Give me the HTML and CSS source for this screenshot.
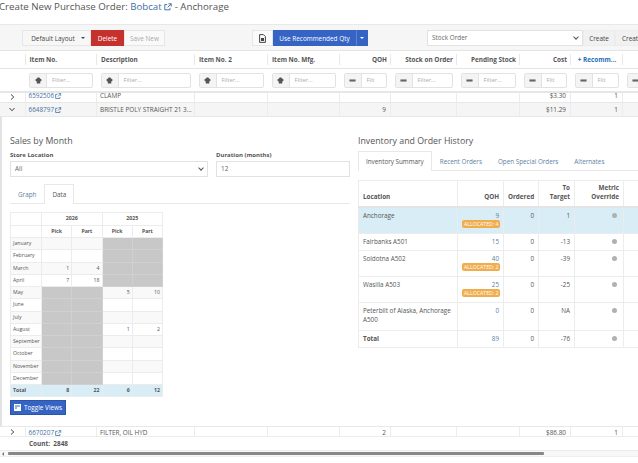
FILE: index.html
```html
<!DOCTYPE html>
<html lang="en">
<head>
<meta charset="utf-8">
<title>Create New Purchase Order</title>
<link rel="stylesheet" href="styles.css">
</head>
<body>
<svg class="defs" width="0" height="0" aria-hidden="true">
  <symbol id="ext" viewBox="0 0 10 10"><path d="M7.5 6v2.5h-6.500v-6.500h3M5.500 1h3.500v3.500M9 1 4.500 5.500" fill="none" stroke="currentColor" stroke-width="1.200"/></symbol>
  <symbol id="flt" viewBox="0 0 8 8"><path d="M0.500 3.500c0-1 1-1.500 1.700-1.500 0-1 .8-1.500 1.800-1.500s1.800.5 1.800 1.500c.7 0 1.700.5 1.700 1.500 0 1-.8 1.500-1.500 1.500v2.500h-4v-2.500c-.7 0-1.500-.5-1.500-1.500z" fill="#555"/></symbol>
  <symbol id="dash" viewBox="0 0 8 8"><rect x="0.500" y="2.800" width="7" height="2.400" fill="#666"/></symbol>
</svg>

<h1 class="title">Create New Purchase Order: <a class="link">Bobcat <svg class="ext-lg"><use href="#ext"/></svg></a> - Anchorage</h1>

<div class="toolbar">
  <button class="btn btn-layout">Default Layout <span class="caret"></span></button>
  <button class="btn btn-danger">Delete</button>
  <button class="btn btn-muted">Save New</button>
  <button class="btn btn-doc"><svg width="7" height="9" viewBox="0 0 7 9"><path d="M.6.6h3.800l2 2v5.800h-5.800z" fill="none" stroke="#444"/><path d="M2 4h3v3H2z" fill="#444"/></svg></button>
  <button class="btn btn-primary">Use Recommended Qty</button>
  <button class="btn btn-primary btn-split"><span class="caret caret-white"></span></button>
  <div class="select select-order">Stock Order<span class="chev"></span></div>
  <button class="btn btn-create">Create</button>
  <button class="btn btn-create-2">Create</button>
</div>

<div class="row head">
  <div class="c"></div>
  <div class="c">Item No.</div>
  <div class="c">Description</div>
  <div class="c">Item No. 2</div>
  <div class="c">Item No. Mfg.</div>
  <div class="c r">QOH</div>
  <div class="c r">Stock on Order</div>
  <div class="c r">Pending Stock</div>
  <div class="c r">Cost</div>
  <div class="c r recomm">+ Recomm...</div>
  <div class="c"></div>
</div>

<div class="row filters">
  <div class="c"></div>
  <div class="c"><div class="filter"><span class="addon"><svg class="fi"><use href="#flt"/></svg></span><span class="ph">Filter...</span></div></div>
  <div class="c"><div class="filter"><span class="addon"><svg class="fi"><use href="#flt"/></svg></span><span class="ph">Filter...</span></div></div>
  <div class="c"><div class="filter"><span class="addon"><svg class="fi"><use href="#flt"/></svg></span><span class="ph">Filter...</span></div></div>
  <div class="c"><div class="filter"><span class="addon"><svg class="fi"><use href="#flt"/></svg></span><span class="ph">Filter...</span></div></div>
  <div class="c"><div class="filter"><span class="addon"><svg class="fi"><use href="#dash"/></svg></span><span class="ph">Filt</span></div></div>
  <div class="c"><div class="filter"><span class="addon"><svg class="fi"><use href="#dash"/></svg></span><span class="ph">Filter...</span></div></div>
  <div class="c"><div class="filter"><span class="addon"><svg class="fi"><use href="#dash"/></svg></span><span class="ph">Filter...</span></div></div>
  <div class="c"><div class="filter"><span class="addon"><svg class="fi"><use href="#dash"/></svg></span><span class="ph">Filt</span></div></div>
  <div class="c"><div class="filter"><span class="addon"><svg class="fi"><use href="#dash"/></svg></span><span class="ph">Filt</span></div></div>
  <div class="c"><div class="filter"><span class="addon"><svg class="fi"><use href="#dash"/></svg></span></div></div>
</div>

<div class="row item item-clipped">
  <div class="c exp"><svg width="5" height="6" viewBox="0 0 5 6"><path d="M1 .5 3.800 3 1 5.500" fill="none" stroke="#444"/></svg></div>
  <div class="c"><a class="link">6592506<svg class="ext"><use href="#ext"/></svg></a></div>
  <div class="c">CLAMP</div>
  <div class="c"></div><div class="c"></div><div class="c r"></div><div class="c"></div><div class="c"></div>
  <div class="c r">$3.30</div><div class="c r">1</div><div class="c"></div>
</div>
<div class="row item item-open">
  <div class="c exp"><svg width="6" height="5" viewBox="0 0 6 5"><path d="M.5 1 3 3.800 5.500 1" fill="none" stroke="#444"/></svg></div>
  <div class="c"><a class="link">6648797<svg class="ext"><use href="#ext"/></svg></a></div>
  <div class="c">BRISTLE POLY STRAIGHT 21 3...</div>
  <div class="c"></div><div class="c"></div><div class="c r">9</div><div class="c"></div><div class="c"></div>
  <div class="c r">$11.29</div><div class="c r">1</div><div class="c"></div>
</div>

<div class="detail">
  <section class="sales">
    <h2>Sales by Month</h2>
    <div class="form">
      <div class="field">
        <label>Store Location</label>
        <div class="select">All<span class="chev"></span></div>
      </div>
      <div class="field">
        <label>Duration (months)</label>
        <div class="select">12</div>
      </div>
    </div>
    <div class="tabs tabs-sales">
      <span class="tab">Graph</span>
      <span class="tab active">Data</span>
    </div>
    <table class="months">
      <colgroup><col class="m0"><col class="m1"><col class="m1"><col class="m1"><col class="m1"></colgroup>
      <tr class="yr"><th></th><th colspan="2">2026</th><th colspan="2">2025</th></tr>
      <tr class="sub"><th></th><th>Pick</th><th>Part</th><th>Pick</th><th>Part</th></tr>
      <tr><td>January</td><td></td><td></td><td class="na"></td><td class="na"></td></tr>
      <tr><td>February</td><td></td><td></td><td class="na"></td><td class="na"></td></tr>
      <tr><td>March</td><td>1</td><td>4</td><td class="na"></td><td class="na"></td></tr>
      <tr><td>April</td><td>7</td><td>18</td><td class="na"></td><td class="na"></td></tr>
      <tr><td>May</td><td class="na"></td><td class="na"></td><td>5</td><td>10</td></tr>
      <tr><td>June</td><td class="na"></td><td class="na"></td><td></td><td></td></tr>
      <tr><td>July</td><td class="na"></td><td class="na"></td><td></td><td></td></tr>
      <tr><td>August</td><td class="na"></td><td class="na"></td><td>1</td><td>2</td></tr>
      <tr><td>September</td><td class="na"></td><td class="na"></td><td></td><td></td></tr>
      <tr><td>October</td><td class="na"></td><td class="na"></td><td></td><td></td></tr>
      <tr><td>November</td><td class="na"></td><td class="na"></td><td></td><td></td></tr>
      <tr><td>December</td><td class="na"></td><td class="na"></td><td></td><td></td></tr>
      <tr class="total"><td>Total</td><td>8</td><td>22</td><td>6</td><td>12</td></tr>
    </table>
    <button class="btn btn-toggle"><svg width="7" height="7" viewBox="0 0 7 7"><path d="M0 0h7v7H0z" fill="#fff"/><path d="M1 2h5M1 4h2" stroke="#3564c5"/></svg> Toggle Views</button>
  </section>

  <section class="history">
    <h2>Inventory and Order History</h2>
    <div class="tabs tabs-history">
      <span class="tab active">Inventory Summary</span>
      <span class="tab">Recent Orders</span>
      <span class="tab">Open Special Orders</span>
      <span class="tab">Alternates</span>
    </div>
    <table class="inv">
      <colgroup><col class="i0"><col class="i1"><col class="i2"><col class="i3"><col class="i4"><col class="i5"></colgroup>
      <tr class="inv-head"><th>Location</th><th>QOH</th><th>Ordered</th><th>To<br>Target</th><th>Metric<br>Override</th><th></th></tr>
      <tr class="sel h26"><td>Anchorage</td><td><a class="num">9</a><span class="badge">ALLOCATED: 4</span></td><td>0</td><td>1</td><td><span class="dot"></span></td><td></td></tr>
      <tr class="h17"><td>Fairbanks A501</td><td><a class="num">15</a></td><td>0</td><td>-13</td><td><span class="dot"></span></td><td></td></tr>
      <tr class="h26"><td>Soldotna A502</td><td><a class="num">40</a><span class="badge">ALLOCATED: 2</span></td><td>0</td><td>-39</td><td><span class="dot"></span></td><td></td></tr>
      <tr class="h26"><td>Wasilla A503</td><td><a class="num">25</a><span class="badge">ALLOCATED: 2</span></td><td>0</td><td>-25</td><td><span class="dot"></span></td><td></td></tr>
      <tr class="h28"><td>Peterbilt of Alaska, Anchorage A500</td><td><a class="num">0</a></td><td>0</td><td>NA</td><td><span class="dot"></span></td><td></td></tr>
      <tr class="h17 inv-total"><td>Total</td><td><a class="num">89</a></td><td>0</td><td>-76</td><td><span class="dot"></span></td><td></td></tr>
    </table>
  </section>
</div>

<div class="row item item-last">
  <div class="c exp"><svg width="5" height="6" viewBox="0 0 5 6"><path d="M1 .5 3.800 3 1 5.500" fill="none" stroke="#444"/></svg></div>
  <div class="c"><a class="link">6670207<svg class="ext"><use href="#ext"/></svg></a></div>
  <div class="c">FILTER, OIL HYD</div>
  <div class="c"></div><div class="c"></div><div class="c r">2</div><div class="c"></div><div class="c"></div>
  <div class="c r">$86.80</div><div class="c r">1</div><div class="c"></div>
</div>

<div class="footer">
  <div class="count">Count:&nbsp; 2848</div>
</div>

<div class="scrollbar">
  <span class="sb-arrow"></span>
  <span class="sb-thumb"></span>
</div>
</body>
</html>
```

FILE: styles.css
```css
* { box-sizing: border-box; }
html, body { margin: 0; padding: 0; }
body {
  width: 638px;
  height: 463px;
  overflow: hidden;
  background: #fff;
  font-family: "Open Sans", sans-serif;
  font-size: 6.400px;
  color: #555;
}
.defs { display: block; height: 0; }
.link { color: #3f6f9f; }
.title {
  margin: 0 0 0 -1px;
  height: 24px;
  font-size: 9.700px;
  line-height: 13px;
  font-weight: 400;
  color: #555;
  white-space: nowrap;
}
.ext-lg { width: 8px; height: 8px; vertical-align: -1px; }
.ext { width: 6.500px; height: 6.500px; margin-left: 1px; vertical-align: -1px; }

.btn {
  font: inherit;
  flex: none;
  height: 16px;
  padding: 0;
  border: 1px solid #e6e6e6;
  background: #f7f7f7;
  color: #444;
  display: inline-flex;
  align-items: center;
  justify-content: center;
  white-space: nowrap;
}
.toolbar {
  height: 27px;
  background: #f6f6f6;
  border-top: 1px solid #e8e8e8;
  border-bottom: 1px solid #e4e4e4;
  padding: 5px 0 0 22px;
  display: flex;
  align-items: flex-start;
  overflow: hidden;
}
.btn-layout { width: 69px; gap: 6px; padding-left: 3px; }
.caret { width: 0; height: 0; border: 2.500px solid transparent; border-top-color: #444; border-bottom: 0; }
.caret-white { border-top-color: #fff; }
.btn-danger { width: 33px; background: #c5322e; border-color: #c5322e; color: #fff; }
.btn-muted { width: 41px; color: #aaa; background: #f9f9f9; }
.btn-doc { width: 21px; margin-left: 87px; background: #fafafa; }
.btn-primary { width: 83px; background: #3564c5; border-color: #3564c5; color: #fff; }
.btn-split { width: 12px; border-left-color: #5f86d6; }
.select {
  height: 16px;
  border: 1px solid #e2e2e2;
  background: #fff;
  padding: 0 4px;
  line-height: 14px;
  color: #666;
  position: relative;
}
.select-order { flex: none; width: 156px; margin-left: 59px; }
.chev {
  position: absolute;
  right: 4px;
  top: 4px;
  width: 4px;
  height: 4px;
  border-right: 1px solid #555;
  border-bottom: 1px solid #555;
  transform: rotate(45deg);
}
.btn-create { width: 32px; background: #f1f1f1; border-color: #ececec; }
.btn-create-2 { width: 32px; background: #f1f1f1; border-color: #ececec; justify-content: flex-start; padding-left: 6px; }

.row {
  display: grid;
  grid-template-columns: 25.500px 71.500px 98px 73px 72px 51px 66px 63px 51px 52px 60px;
  width: 700px;
}
.c { min-width: 0; overflow: hidden; white-space: nowrap; }
.r { text-align: right; }

.head {
  height: 18px;
  border-bottom: 1px solid #e4e4e4;
  font-weight: 700;
  color: #555;
}
.head .c {
  margin: 3px 0 3px -1px;
  padding: 0 4px;
  line-height: 11px;
  border-left: 1px solid #e8e8e8;
}
.head .c:first-child { border-left: 0; margin-left: 0; }
.head .recomm { color: #1f6fb5; text-align: center; }

.filters {
  height: 23.500px;
  border-bottom: 2px solid #e6e6e6;
}
.filter {
  height: 15px;
  margin: 4px 4px 0 3.500px;
  border: 1px solid #e2e2e2;
  border-radius: 2px;
  display: flex;
  background: #fff;
  color: #aaa;
  font-size: 5.800px;
  line-height: 13px;
}
.addon {
  flex: none;
  width: 17px;
  background: #f4f4f4;
  border-right: 1px solid #e2e2e2;
  display: flex;
  align-items: center;
  justify-content: center;
}
.fi { width: 7px; height: 7px; }
.ph { padding-left: 5px; overflow: hidden; }

.item { border-bottom: 1px solid #e8e8e8; }
.item .c { border-right: 1px solid #ececec; padding: 0 3px; line-height: 13px; color: #555; }
.item .c .link { color: #3f6f9f; }
.item .c:first-child { display: flex; align-items: center; justify-content: center; }
.item .c.r { padding-right: 4px; }
.item-clipped { height: 10.500px; }
.item-clipped .c { line-height: 6px; }
.item-open { height: 14px; background: #f5f5f5; }
.item-last { height: 10px; border-bottom: 0; border-top: 1px solid #e8e8e8; }
.item-last .c { line-height: 12px; }

.detail {
  height: 309px;
  border-left: 2px solid #e2e2e2;
  display: grid;
  grid-template-columns: 340px 1fr;
  gap: 8px;
  padding: 18px 0 0 8px;
  overflow: hidden;
}
h2 {
  margin: 0;
  font-size: 8.800px;
  line-height: 13px;
  font-weight: 400;
  color: #555;
}
.form {
  display: grid;
  grid-template-columns: 198px 134px;
  gap: 8px;
  margin-top: 3px;
}
.field label {
  display: block;
  font-weight: 700;
  font-size: 6px;
  line-height: 9px;
  height: 10px;
  color: #555;
}
.tabs {
  display: flex;
  border-bottom: 1px solid #e8e8e8;
  height: 20px;
  font-size: 6.300px;
  color: #5d7f9f;
}
.tab {
  padding: 0 7px;
  line-height: 19px;
  border: 1px solid transparent;
  border-bottom: 0;
  height: 20px;
}
.tab.active {
  border-color: #e8e8e8;
  background: #fff;
  color: #555;
}
.tabs-sales { margin-top: 7px; }
.tabs-history { margin-top: 3px; }

table { border-collapse: collapse; table-layout: fixed; }
.months {
  width: 152px;
  margin-top: 8px;
  font-size: 5.200px;
  color: #555;
}
.m0 { width: 31px; }
.m1 { width: 30.250px; }
.months th, .months td {
  border: 1px solid #ececec;
  padding: 0 2px;
  height: 12.250px;
  line-height: 9px;
}
.months th { font-weight: 700; text-align: center; }
.months .yr th, .months .sub th { height: 12.500px; }
.months td { text-align: right; }
.months td:first-child { text-align: left; }
.months tr:nth-child(odd) td { background: #f9f9f9; }
.months tr td.na { background: #c8c8c8; border-color: #d0d0d0; }
.months tr.total td { background: #d9edf6; font-weight: 700; }
.btn-toggle {
  margin-top: 3px;
  width: 56px;
  height: 15px;
  background: #3564c5;
  border-color: #2c55aa;
  color: #fff;
  gap: 3px;
}

.inv {
  width: 295px;
  margin-top: 9px;
  font-size: 6.300px;
}
.i0 { width: 99px; }
.i1 { width: 46px; }
.i2 { width: 35px; }
.i3 { width: 36px; }
.i4 { width: 49px; }
.i5 { width: 30px; }
.inv th, .inv td {
  border: 1px solid #ececec;
  padding: 2px 4px;
  vertical-align: top;
  text-align: right;
  line-height: 9px;
}
.inv th:first-child, .inv td:first-child { text-align: left; }
.inv .inv-head th {
  height: 26px;
  vertical-align: bottom;
  font-weight: 700;
  padding-bottom: 5px;
  border-bottom: 2px solid #e4e4e4;
}
.sel td { background: #d9edf6; }
.h17 td { height: 17px; padding-top: 3px; }
.h26 td { height: 26px; padding-top: 3px; }
.h28 td { height: 28px; padding-top: 3px; }
.num { color: #5d7f9f; display: block; }
.inv-total td:first-child { font-weight: 700; }
.badge {
  display: inline-block;
  background: #f0ad4e;
  color: #fff;
  border-radius: 2px;
  font-size: 5.200px;
  line-height: 8px;
  padding: 0 2px;
  white-space: nowrap;
  vertical-align: top;
}
.dot {
  display: inline-block;
  width: 5px;
  height: 5px;
  margin: 1px 2px 0 0;
  border-radius: 50%;
  background: #b0b0b0;
}

.footer {
  height: 15px;
  border-top: 1px solid #ececec;
  border-bottom: 1px solid #ececec;
  padding-left: 29px;
  font-weight: 700;
  line-height: 13px;
  color: #555;
}
.scrollbar {
  height: 6px;
  background: #f8f8f8;
  border-bottom: 1px solid #eee;
  display: flex;
  align-items: center;
  padding-left: 2px;
}
.sb-arrow {
  width: 0;
  height: 0;
  border: 2px solid transparent;
  border-right-color: #777;
  border-left: 0;
  margin-right: 4px;
}
.sb-thumb {
  width: 536px;
  height: 3px;
  background: #888;
  border-radius: 1px;
}
```
